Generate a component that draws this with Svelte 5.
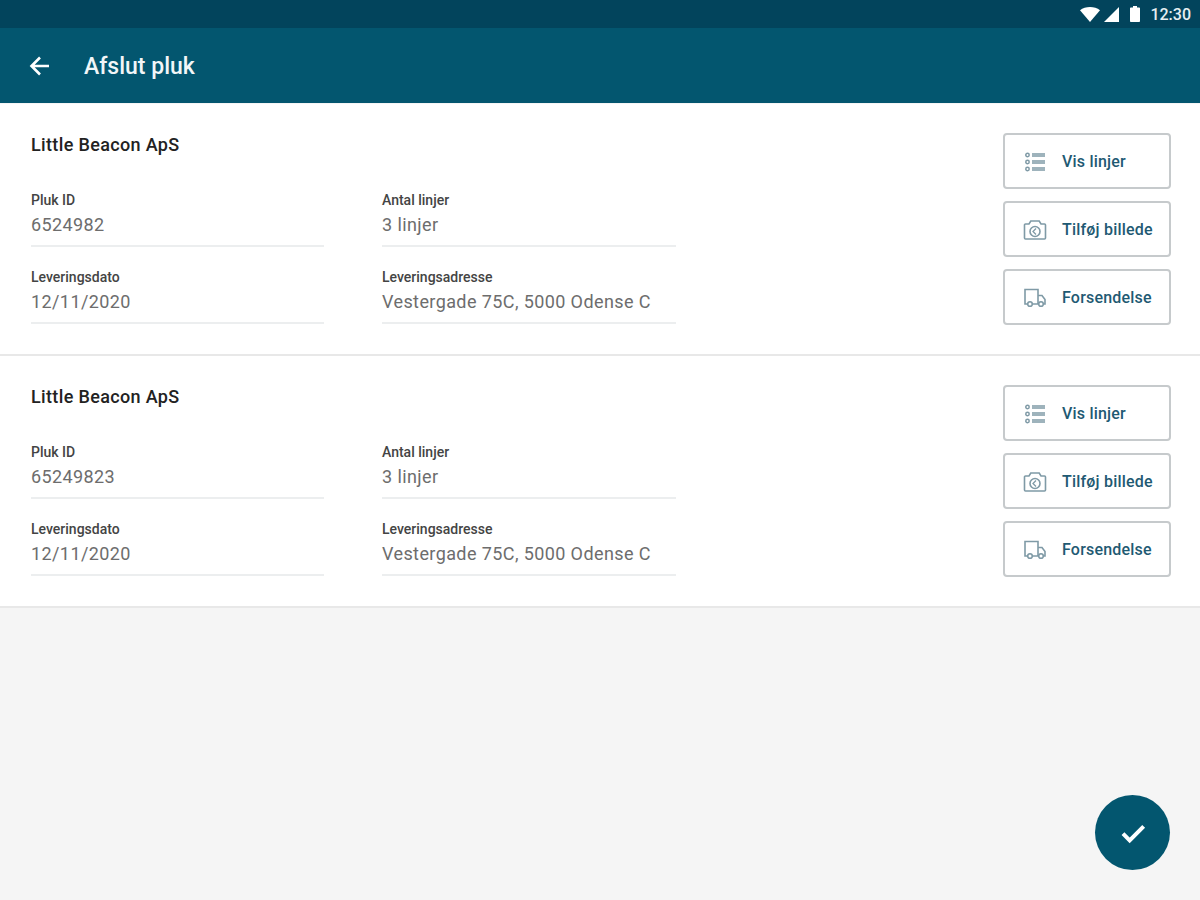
<script lang="ts">
	const picks = [
		{ id: '6524982' },
		{ id: '65249823' }
	];
</script>

<div class="screen">
	<div class="status-bar">
		<svg class="wifi" width="20" height="15" viewBox="0 0 20 15"><path d="M0 3.200C2.800 1.100 6.200 0 10 0s7.200 1.100 10 3.200L10 15z" fill="#fff" /></svg>
		<svg class="signal" width="15" height="15" viewBox="0 0 15 15"><path d="M15 0v15H0z" fill="#fff" /></svg>
		<svg class="battery" width="10" height="16" viewBox="0 0 10 16"><path d="M3 0h4v1.500h2.200c.4 0 .8.4.8.8v12.900c0 .4-.4.8-.8.8H.8c-.4 0-.8-.4-.8-.8V2.300c0-.4.4-.8.8-.8H3z" fill="#fff" /></svg>
		<span class="clock">12:30</span>
	</div>

	<header class="toolbar">
		<svg width="24" height="24" viewBox="0 0 24 24" fill="none" stroke="#fff" stroke-width="2.600"><path d="M21 12H4M12 3.500 3.500 12l8.500 8.500" /></svg>
		<h1>Afslut pluk</h1>
	</header>

	{#each picks as pick}
		<section class="pick">
			<div class="details">
				<h2>Little Beacon ApS</h2>
				<div class="fields">
					<div class="field">
						<span class="label">Pluk ID</span>
						<span class="value">{pick.id}</span>
					</div>
					<div class="field">
						<span class="label">Antal linjer</span>
						<span class="value">3 linjer</span>
					</div>
					<div class="field">
						<span class="label">Leveringsdato</span>
						<span class="value">12/11/2020</span>
					</div>
					<div class="field">
						<span class="label">Leveringsadresse</span>
						<span class="value">Vestergade 75C, 5000 Odense C</span>
					</div>
				</div>
			</div>
			<div class="actions">
				<button>
					<svg width="24" height="24" viewBox="0 0 24 24" fill="none" stroke="#7f9aa6" stroke-width="1.500">
						<circle cx="4.500" cy="5" r="1.700" />
						<circle cx="4.500" cy="12" r="1.700" />
						<circle cx="4.500" cy="19" r="1.700" />
						<path d="M9 4h13M9 6h13M9 11h13M9 13h13M9 18h13M9 20h13" stroke-width="1.400" />
					</svg>
					Vis linjer
				</button>
				<button>
					<svg width="24" height="24" viewBox="0 0 24 24" fill="none" stroke="#7f9aa6" stroke-width="1.600">
						<path d="M2.500 6h3.500l1.800-3h8.400l1.800 3h3.500a1 1 0 0 1 1 1v13a1 1 0 0 1-1 1h-19a1 1 0 0 1-1-1V7a1 1 0 0 1 1-1z" />
						<circle cx="12" cy="13.500" r="5" />
						<path d="M13 10.500 10 13.500l3 3" stroke-width="1.300" />
					</svg>
					Tilføj billede
				</button>
				<button>
					<svg width="24" height="24" viewBox="0 0 24 24" fill="none" stroke="#7f9aa6" stroke-width="1.600">
						<path d="M4.500 18H2V3.500h13V18H9.500M15 9.500h4l3 4V18h-1.500M15 18h.5" />
						<circle cx="7" cy="18" r="2.300" />
						<circle cx="18" cy="18" r="2.300" />
					</svg>
					Forsendelse
				</button>
			</div>
		</section>
	{/each}

	<button class="fab" aria-label="Afslut">
		<svg width="32" height="32" viewBox="0 0 24 24" fill="none" stroke="#fff" stroke-width="3"><path d="M4.500 12.500 9.500 17.500 20 7" /></svg>
	</button>
</div>

<style>
	:global(body) {
		margin: 0;
		background: #f5f5f5;
	}

	.screen {
		position: relative;
		width: 1200px;
		height: 900px;
		overflow: hidden;
		background: #f5f5f5;
		font-family: Roboto, 'Liberation Sans', sans-serif;
	}

	.status-bar {
		height: 28px;
		background: #02445c;
		display: flex;
		align-items: center;
		justify-content: flex-end;
		padding-right: 9px;
		color: #fff;
	}

	.wifi {
		margin-right: 4px;
	}

	.signal {
		margin-right: 11px;
	}

	.battery {
		margin-right: 10px;
	}

	.clock {
		font-size: 16px;
		font-weight: 500;
		color: #e6eef1;
	}

	.toolbar {
		height: 75px;
		background: #03566f;
		display: flex;
		align-items: center;
		padding-left: 28px;
		gap: 32px;
		color: #fff;
		box-sizing: border-box;
	}

	.toolbar h1 {
		margin: 0;
		padding-top: 2px;
		font-size: 23px;
		font-weight: 500;
		color: #f2f6f8;
	}

	.pick {
		display: flex;
		justify-content: space-between;
		background: #fff;
		height: 252px;
		box-sizing: border-box;
		padding: 29px 29px 0 31px;
		border-bottom: 2px solid #e8e8e8;
	}

	.pick:first-of-type {
		margin-top: 1px;
	}

	.details {
		width: 645px;
	}

	.details h2 {
		margin: 0;
		font-size: 18px;
		line-height: 24px;
		font-weight: 500;
		color: #222;
		letter-spacing: 0.35px;
	}

	.fields {
		display: grid;
		grid-template-columns: 293px 294px;
		column-gap: 58px;
		row-gap: 22px;
		margin-top: 35px;
	}

	.field {
		display: flex;
		flex-direction: column;
		height: 55px;
		box-sizing: border-box;
		border-bottom: 2px solid #eceeef;
	}

	.label {
		font-size: 14px;
		line-height: 16px;
		font-weight: 500;
		color: #444;
	}

	.value {
		font-size: 18px;
		line-height: 26px;
		margin-top: 4px;
		color: #6d6d6d;
		letter-spacing: 0.4px;
	}

	.actions {
		display: flex;
		flex-direction: column;
		gap: 12px;
	}

	button {
		font-family: inherit;
	}

	.actions button {
		width: 168px;
		height: 56px;
		display: flex;
		align-items: center;
		gap: 15px;
		padding: 1px 0 0 18px;
		background: #fff;
		border: 2px solid #c6cacc;
		border-radius: 4px;
		font-size: 16px;
		font-weight: 500;
		color: #1f5a73;
		box-sizing: border-box;
		letter-spacing: 0.2px;
	}

	.fab {
		position: absolute;
		left: 1095px;
		top: 795px;
		width: 75px;
		height: 75px;
		border-radius: 50%;
		border: none;
		background: #03566f;
		display: flex;
		align-items: center;
		justify-content: center;
		padding: 0;
	}
</style>
